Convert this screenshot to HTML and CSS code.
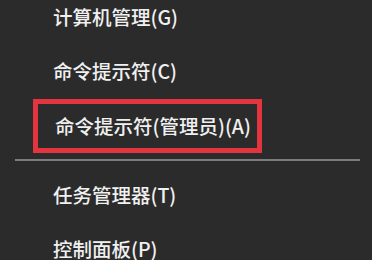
FILE: index.html
```html
<!DOCTYPE html>
<html lang="zh-CN">
<head>
<meta charset="utf-8">
<link rel="stylesheet" href="styles.css">
</head>
<body>
<ul class="menu">
  <li class="item">计算机管理(G)</li>
  <li class="item">命令提示符(C)</li>
  <li class="item item-marked"><span class="mark">命令提示符(管理员)(A)</span></li>
  <li class="sep" role="separator"></li>
  <li class="item">任务管理器(T)</li>
  <li class="item item-last">控制面板(P)</li>
</ul>
</body>
</html>
```

FILE: styles.css
```css
html, body {
  margin: 0;
  padding: 0;
  background: #2b2b2b;
  overflow: hidden;
}
body {
  width: 372px;
  height: 260px;
  font-family: "Noto Sans CJK SC", "Noto Sans", sans-serif;
  font-size: 19.5px;
  font-weight: 500;
  color: #f0f0f0;
}
.menu {
  list-style: none;
  margin: -10px 0 0 0;
  padding: 0;
  display: flex;
  flex-direction: column;
}
.item {
  height: 54px;
  line-height: 22px;
  padding-left: 53px;
  white-space: nowrap;
  display: flex;
  align-items: center;
}
.item-last {
  height: auto;
  padding-top: 16px;
}
.item-marked {
  padding-left: 33px;
  margin-top: 1px;
}
.mark {
  display: flex;
  align-items: center;
  box-sizing: border-box;
  width: 229px;
  height: 54px;
  border: 5px solid #e3343f;
  padding-left: 17px;
}
.sep {
  height: 2px;
  background: #7c7c7c;
  margin: 6px 12px 7px 15px;
}
```
